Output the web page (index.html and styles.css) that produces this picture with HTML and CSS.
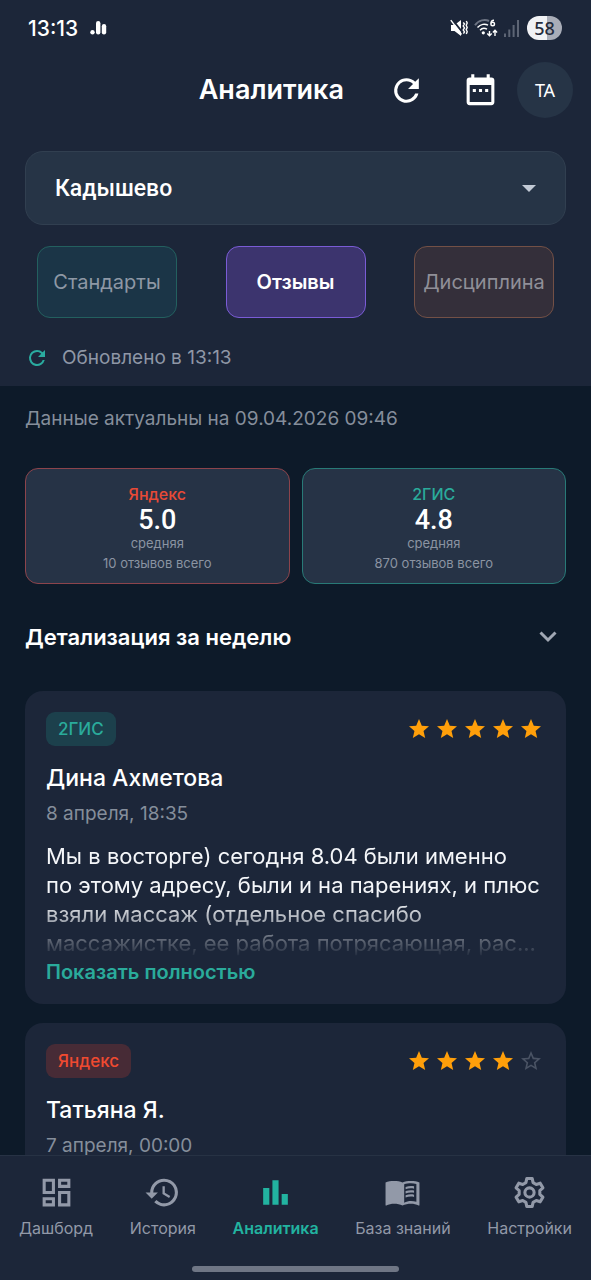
FILE: index.html
```html
<!DOCTYPE html>
<html lang="ru">
<head>
<meta charset="utf-8">
<meta name="viewport" content="width=device-width, initial-scale=1">
<title>Аналитика</title>
<link rel="stylesheet" href="styles.css">
</head>
<body>
<svg class="defs" aria-hidden="true">
  <symbol id="refresh" viewBox="0 0 24 24"><path d="M17.65 6.35A7.96 7.96 0 0 0 12 4a8 8 0 1 0 7.73 10h-2.08A6 6 0 1 1 12 6c1.66 0 3.14.69 4.22 1.78L13 11h7V4z"/></symbol>
  <symbol id="star" viewBox="0 0 24 24"><path d="M12 17.27 18.18 21l-1.64-7.03L22 9.24l-7.19-.61L12 2 9.19 8.63 2 9.24l5.46 4.73L5.82 21z"/></symbol>
  <symbol id="star-empty" viewBox="0 0 24 24"><path d="m22 9.24-7.19-.62L12 2 9.19 8.63 2 9.24l5.46 4.73L5.82 21 12 17.27 18.18 21l-1.63-7.03zM12 15.4l-3.76 2.27 1-4.28-3.32-2.88 4.38-.38L12 6.1l1.71 4.04 4.38.38-3.32 2.88 1 4.28z"/></symbol>
</svg>
<div class="app">
  <header class="top">
    <div class="status">
      <div class="status-group">
        <span class="clock">13:13</span>
        <svg class="status-bars" viewBox="0 0 17 14"><circle cx="2.5" cy="11.3" r="2.2"/><rect x="6" y="0" width="4.4" height="13.5" rx="2.2"/><rect x="11.8" y="3" width="4.4" height="10.5" rx="2.2"/></svg>
      </div>
      <div class="status-group status-right">
        <svg class="mute" viewBox="0 0 18 18"><path d="M1 6h3.500L11 1v16l-6.500-5H1z"/><path class="cut" d="M2 .2 13 14"/><path class="line" d="M.8 1.200 11.500 15.500M13.200 3.500l1.300 1.400-1.300 2 1.300 2-1.300 2 1.300 2-1.100 1.700M16.300 2l.9 2-1 2.200 1 2.200-1 2.200 1 2.200-.9 2.200"/></svg>
        <svg class="wifi" viewBox="0 0 24 18"><path class="dim" d="M1 6.200C4.500 1 11 0 15 2"/><path class="line" d="M3.500 8.500c3-3.600 7.500-4 10.500-2.300M6 11.200c2-2.200 4.500-2.400 7-1M20 1.200c-2 0-3 1.500-3 3.300M15.500 12v4.700M13.300 14.600l2.200 2.200 2.200-2.200M21 17v-5.500M18.900 13.500l2.100-2.200 2.100 2.200"/><circle class="line" cx="18.700" cy="5" r="1.800"/><circle cx="9.300" cy="13.800" r="1.600"/></svg>
        <svg class="signal" viewBox="0 0 15 17"><path d="M0 13.500h2V17H0zM4.300 9.500h2V17h-2zM8.600 5h2v12h-2zM13 0h2v17h-2z"/></svg>
        <span class="battery">58</span>
      </div>
    </div>
    <div class="appbar">
      <h1 class="title">Аналитика</h1>
      <button class="icon-btn" aria-label="Обновить"><svg class="icon-lg"><use href="#refresh"/></svg></button>
      <button class="icon-btn" aria-label="Календарь"><svg class="icon-lg" viewBox="0 0 24 24"><path fill-rule="evenodd" d="M19 3.500h-1v-2h-2v2H8v-2H6v2H5a2 2 0 0 0-2 2v14a2 2 0 0 0 2 2h14a2 2 0 0 0 2-2V5.500a2 2 0 0 0-2-2zM19 19.500H5V8.500h14zM7 11h2v2H7zM11 11h2v2h-2zM15 11h2v2h-2z"/></svg></button>
      <button class="avatar">TA</button>
    </div>
    <div class="filters">
      <div class="picker">
        <select class="select" aria-label="Филиал"><option>Кадышево</option></select>
        <svg class="caret" viewBox="0 0 14 7"><path d="M0 0h14L7 7z"/></svg>
      </div>
      <div class="tabs">
        <button class="tab tab-teal">Стандарты</button>
        <button class="tab tab-active">Отзывы</button>
        <button class="tab tab-brown">Дисциплина</button>
      </div>
      <div class="updated"><svg class="icon-sm"><use href="#refresh"/></svg><span>Обновлено в 13:13</span></div>
    </div>
  </header>

  <main class="content">
    <p class="actual">Данные актуальны на 09.04.2026 09:46</p>
    <div class="ratings">
      <section class="rating yandex">
        <h2 class="source">Яндекс</h2>
        <div class="score">5.0</div>
        <div class="note">средняя</div>
        <div class="total">10 отзывов всего</div>
      </section>
      <section class="rating gis">
        <h2 class="source">2ГИС</h2>
        <div class="score">4.8</div>
        <div class="note">средняя</div>
        <div class="total">870 отзывов всего</div>
      </section>
    </div>
    <button class="details"><span>Детализация за неделю</span><svg class="chevron" viewBox="0 0 18 12"><path d="m1.500 1.500 7.500 7.500 7.500-7.500"/></svg></button>

    <article class="review">
      <div class="review-head">
        <span class="badge badge-gis">2ГИС</span>
        <div class="stars" role="img" aria-label="5 из 5"><svg><use href="#star"/></svg><svg><use href="#star"/></svg><svg><use href="#star"/></svg><svg><use href="#star"/></svg><svg><use href="#star"/></svg></div>
      </div>
      <h3 class="name">Дина Ахметова</h3>
      <div class="date">8 апреля, 18:35</div>
      <p class="text">Мы в восторге) сегодня 8.04 были именно по&nbsp;этому адресу, были и на парениях, и плюс взяли массаж (отдельное спасибо массажистке, ее работа потрясающая, рас...</p>
      <button class="more">Показать полностью</button>
    </article>

    <article class="review">
      <div class="review-head">
        <span class="badge badge-yandex">Яндекс</span>
        <div class="stars" role="img" aria-label="4 из 5"><svg><use href="#star"/></svg><svg><use href="#star"/></svg><svg><use href="#star"/></svg><svg><use href="#star"/></svg><svg class="empty"><use href="#star-empty"/></svg></div>
      </div>
      <h3 class="name">Татьяна Я.</h3>
      <div class="date">7 апреля, 00:00</div>
    </article>
  </main>

  <footer class="bottom">
    <nav class="nav">
      <a class="nav-item" href="#"><svg viewBox="0 0 24 24"><path d="M19 5v2h-4V5zM9 5v6H5V5zm10 8v6h-4v-6zM9 17v2H5v-2zM21 3h-8v6h8zM11 3H3v10h8zm10 8h-8v10h8zm-10 4H3v6h8z"/></svg>Дашборд</a>
      <a class="nav-item" href="#"><svg viewBox="0 0 24 24"><path d="M13 3a9 9 0 0 0-9 9H1l3.890 3.890.070.140L9 12H6a7 7 0 1 1 2.060 4.940l-1.420 1.420A9 9 0 1 0 13 3zm-1 5v5l4.250 2.520.770-1.280-3.520-2.090V8z"/></svg>История</a>
      <a class="nav-item active" href="#"><svg viewBox="0 0 24 24"><path d="M4 9h4v11H4zM10 4h4v16h-4zM16 13h4v7h-4z"/></svg>Аналитика</a>
      <a class="nav-item" href="#"><svg viewBox="0 0 24 24"><path fill-rule="evenodd" d="M12 5.500C10.500 4.800 8.500 4.500 6.500 4.500S2.500 4.500 1 5.500v14.600c0 .4.300.5.500.4 1.500-.8 3.300-1.200 5-1.200 2 0 4 .3 5.500 1.200 1.500-.9 3.700-1.200 5.500-1.200s3.400.3 5 1.200c.3.100.5-.1.500-.4V5.500c-1.500-1-3.500-1-5.500-1s-4 .3-5.500 1zm1.100 1.200c1.300-.5 2.900-.7 4.400-.7 1.200 0 2.300.1 3.500.5v11.500c-1.100-.4-2.300-.5-3.500-.5-1.500 0-3.100.4-4.400 1.100z"/><path d="M14 9.900c1.700-.7 3.700-.8 5.500-.4V8c-1.900-.4-3.800-.2-5.500.4zM14 12.600c1.700-.7 3.700-.8 5.500-.4v-1.500c-1.900-.4-3.800-.2-5.500.4zM14 15.300c1.700-.7 3.700-.8 5.500-.4v-1.500c-1.900-.4-3.800-.2-5.500.4z"/></svg>База знаний</a>
      <a class="nav-item" href="#"><svg class="gear" viewBox="0 0 24 24"><path d="M9.670 5.610 10.240 2.970H13.760L14.330 5.610 16.370 6.790 18.950 5.960 20.700 9 18.700 10.820V13.180L20.700 15 18.950 18.040 16.370 17.210 14.330 18.390 13.760 21.030H10.240L9.670 18.390 7.630 17.210 5.050 18.040 3.300 15 5.300 13.180V10.820L3.300 9 5.050 5.960 7.630 6.790z"/><circle cx="12" cy="12" r="3"/></svg>Настройки</a>
    </nav>
    <div class="home-bar"></div>
  </footer>
</div>
</body>
</html>
```
FILE: styles.css
```css
* { box-sizing: border-box; }
body {
  margin: 0;
  background: #0d1a29;
  color: #fff;
  font-family: Inter, Roboto, sans-serif;
}
h1, h2, h3, p { margin: 0; font-weight: 500; }
button, select {
  font: inherit;
  color: inherit;
  margin: 0;
  padding: 0;
  border: 0;
  background: none;
  cursor: pointer;
}
svg { display: block; fill: currentColor; flex: none; }
.defs { position: absolute; width: 0; height: 0; }

.app { display: flex; flex-direction: column; height: 100vh; overflow: hidden; }

/* Header */
.top { flex: none; background: #1c2639; padding-bottom: 16px; }
.status {
  display: flex;
  justify-content: space-between;
  align-items: center;
  height: 56px;
  padding: 0 29px 0 28px;
}
.status-group { display: flex; align-items: center; gap: 12px; }
.status-right { gap: 6px; }
.clock { font-size: 21px; font-weight: 500; }
.status-bars { width: 17px; height: 14px; }
.mute { width: 18px; height: 18px; }
.wifi { width: 24px; height: 18px; }
.mute .line, .wifi .line { fill: none; stroke: #fff; stroke-width: 1.4; }
.mute .cut { stroke: #1c2639; stroke-width: 2; }
.wifi .dim { fill: none; stroke: #6d7483; stroke-width: 2; }
.signal { width: 15px; height: 17px; color: #5d6575; }
.battery {
  width: 35px;
  margin-left: 2px;
  border-radius: 12px;
  background: linear-gradient(90deg, #f1f2f5 58%, #a9adb8 58%);
  color: #252c3c;
  font: 500 18px/24px "Noto Sans", sans-serif;
  text-align: center;
}

.appbar {
  display: grid;
  grid-template-columns: 1fr auto 74px 74px 56px;
  align-items: center;
  height: 68px;
  padding-right: 18px;
}
.title { grid-column: 2; font-size: 27px; line-height: 32px; font-weight: 600; margin-right: 25px; }
.icon-btn { display: flex; justify-content: center; }
.icon-lg { width: 37px; height: 37px; }
.avatar {
  width: 56px;
  height: 56px;
  border-radius: 50%;
  background: #263446;
  font-family: "Noto Sans", sans-serif;
  font-size: 18px;
}

.filters { display: flex; flex-direction: column; padding: 27px 25px 0; }
.picker { display: grid; align-items: center; }
.select, .caret { grid-area: 1 / 1; }
.select {
  appearance: none;
  width: 100%;
  height: 74px;
  padding: 0 29px;
  border: 1px solid #313f50;
  border-radius: 18px;
  background: #263446;
  font-family: Roboto, sans-serif;
  font-size: 23px;
  font-weight: 500;
}
.caret { justify-self: end; width: 14px; height: 7px; margin-right: 30px; color: #c2cad5; pointer-events: none; }
.tabs { display: flex; justify-content: space-between; margin-top: 21px; padding: 0 12px; }
.tab {
  width: 140px;
  height: 72px;
  border: 1px solid;
  border-radius: 13px;
  font-size: 20px;
  color: #8e98a5;
}
.tab-teal { background: #1b3547; border-color: #23605f; }
.tab-active { background: #3c346e; border-color: #7a5cd6; color: #fff; font-weight: 600; }
.tab-brown { background: #342f3a; border-color: #735046; color: #908f98; }
.updated {
  display: flex;
  align-items: center;
  gap: 13px;
  margin-top: 28px;
  font-size: 19px;
  line-height: 24px;
  color: #8f97a6;
}
.icon-sm { width: 24px; height: 24px; color: #2aab9f; }

/* Content */
.content { flex: 1; min-height: 0; overflow: hidden; padding: 20px 25px 0; }
.actual { font-size: 19px; line-height: 26px; color: #858e9b; font-weight: 400; }
.ratings { display: grid; grid-template-columns: 1fr 1fr; gap: 12px; margin-top: 36px; }
.rating {
  height: 116px;
  padding-top: 16px;
  border: 1px solid;
  border-radius: 13px;
  background: #263346;
  text-align: center;
}
.rating.yandex { border-color: #8c444c; }
.rating.gis { border-color: #287a77; }
.source { font-size: 16px; line-height: 18px; font-weight: 500; }
.yandex .source { color: #e84a36; }
.gis .source { color: #2aab9b; }
.score { font-family: Roboto, sans-serif; font-size: 27px; line-height: 34px; font-weight: 500; }
.note, .total { color: #8b94a2; font-size: 13px; line-height: 12px; }
.total { line-height: 28px; }
.details {
  display: flex;
  align-items: center;
  justify-content: space-between;
  width: 100%;
  margin-top: 38px;
  padding-right: 9px;
  font-size: 22px;
  line-height: 30px;
  font-weight: 600;
}
.chevron { width: 18px; height: 12px; fill: none; stroke: #a0a7b3; stroke-width: 3; }

.review {
  margin-top: 19px;
  padding: 21px 21px 19px;
  border-radius: 18px;
  background: #1c2639;
}
.details + .review { margin-top: 39px; }
.review-head { display: flex; justify-content: space-between; align-items: center; }
.badge { padding: 0 12px; border-radius: 9px; font-size: 17px; line-height: 34px; font-weight: 500; }
.badge-gis { background: #1c404c; color: #2aab9b; }
.badge-yandex { background: #472b36; color: #f04a30; }
.stars { display: flex; gap: 4px; margin-right: 2px; color: #ff9f0a; }
.stars svg { width: 24px; height: 24px; }
.stars .empty { color: #4a5364; }
.name { margin-top: 17px; font-size: 23px; line-height: 30px; font-weight: 500; }
.date { margin-top: 9px; font-size: 19px; line-height: 24px; color: #858e9b; }
.text {
  margin-top: 16px;
  font-size: 22px;
  line-height: 29px;
  font-weight: 400;
  color: #f4f6f9;
  -webkit-mask-image: linear-gradient(#000 50%, transparent);
  mask-image: linear-gradient(#000 50%, transparent);
}
.more { display: block; margin-top: 1px; font-size: 20px; line-height: 26px; font-weight: 600; color: #2aab9b; }

/* Bottom navigation */
.bottom { flex: none; background: #1c2639; border-top: 1px solid #273244; padding-bottom: 8px; }
.nav { display: flex; justify-content: space-between; padding: 18px 19px 0; }
.nav-item {
  display: flex;
  flex-direction: column;
  align-items: center;
  gap: 7px;
  color: #9299a8;
  font-size: 16px;
  line-height: 20px;
  text-decoration: none;
}
.nav-item svg { width: 37px; height: 37px; }
.nav-item .gear { fill: none; stroke: currentColor; stroke-width: 2; stroke-linejoin: round; }
.nav-item.active { color: #22b3a0; font-weight: 600; }
.home-bar { width: 35%; height: 6px; margin: 28px auto 0; border-radius: 3px; background: #6f7685; }
```
